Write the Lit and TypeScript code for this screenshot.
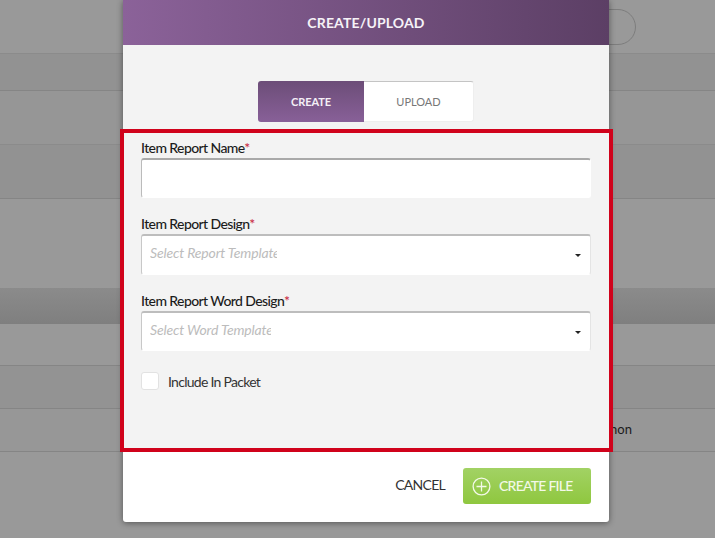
import { LitElement, html, css } from "lit";
import { customElement } from "lit/decorators.js";

@customElement("app-root")
export class AppRoot extends LitElement {
  static styles = css`
    :host { display: block; width: 715px; height: 538px; position: relative; overflow: hidden; background: #999; font-family: Lato, "Liberation Sans", sans-serif; color: #222; }
    * { box-sizing: border-box; }
    .bg { display: flex; flex-direction: column; height: 538px; }
    .row { border-bottom: 1px solid #858585; flex: none; display: flex; justify-content: flex-end; align-items: center; }
    .r0 { height: 54px; background: #999; border-bottom-color: #8b8b8b; padding-right: 79px; }
    .r1 { height: 37px; background: #929292; }
    .r2 { height: 54px; background: #969696; border-bottom-color: #8b8b8b; }
    .r3 { height: 54px; background: #929292; }
    .r4 { height: 89px; background: #999; border: 0; }
    .band { height: 36px; background: linear-gradient(#8b8b8b, #7f7f7f); border: 0; }
    .r5 { height: 42px; background: #999; }
    .r6 { height: 43px; background: #939393; }
    .r7 { height: 43px; background: #979797; padding: 0 83px 2px 0; font-size: 13px; color: #1c1c1c; }
    .circle { width: 72px; height: 36px; border: 1px solid #7d7d7d; border-radius: 18px; margin-top: 1px; }
    .modal { position: absolute; left: 123px; top: 0; width: 486px; height: 522px; background: #fff; border-radius: 0 0 3px 3px; box-shadow: 0 1px 6px rgba(0,0,0,.45); display: flex; flex-direction: column; }
    header { height: 45px; flex: none; background: linear-gradient(90deg, #8b6299, #5c3f65); color: #f6f2f7; font-weight: 700; font-size: 14px; letter-spacing: 0.15px; display: flex; align-items: center; justify-content: center; }
    .top { height: 84px; flex: none; background: #f3f3f3; display: flex; justify-content: center; padding-top: 36px; }
    .tabs { display: flex; height: 41px; width: 216px; }
    .tab { display: flex; align-items: center; justify-content: center; font-size: 11px; }
    .tab.on { width: 106px; background: linear-gradient(#6c4d78, #886098); color: #f4eff6; font-weight: 700; letter-spacing: -0.1px; border-radius: 3px 0 0 3px; }
    .tab.off { width: 110px; background: #fff; color: #777; border: 1px solid #eee; border-top-color: #c4c4c4; border-left: 0; border-radius: 0 3px 3px 0; }
    .form { flex: none; height: 323px; margin: 0 -4px 0 -3px; border: 4px solid #d0021b; background: #f3f3f3; padding: 6px 18px 0 17px; position: relative; display: flex; flex-direction: column; }
    label.f { display: block; font-size: 14px; font-weight: 500; line-height: 18px; height: 19px; color: #1c1c1c; letter-spacing: -0.6px; }
    label.f i { color: #c8213a; font-style: normal; }
    .input { height: 40px; background: #fff; border: 1px solid #fff; border-top: 2px solid #a9a9a9; border-left: 1px solid #bbb; border-radius: 3px; margin-bottom: 17px; }
    .select { height: 41px; background: #fff; border: 1px solid #fff; border-top: 2px solid #bdbdbd; border-left: 1px solid #c8c8c8; border-right-color: #e4e4e4; border-radius: 3px; margin-bottom: 17px; display: flex; align-items: center; padding: 0 9px 5px 8px; justify-content: space-between; }
    .select.w { height: 40px; margin-bottom: 22px; padding-bottom: 4px; }
    .ph { font-style: italic; font-size: 14px; letter-spacing: -0.15px; color: #bcbcbc; width: 127px; overflow: hidden; white-space: nowrap; }
    .w .ph { width: 121px; }
    .caret { width: 0; height: 0; border-left: 3px solid transparent; border-right: 3px solid transparent; border-top: 3px solid #222; margin-top: 6px; }
    .w .caret { margin-top: 5px; }
    .check { display: flex; align-items: center; gap: 9px; font-size: 14px; letter-spacing: -0.72px; color: #333; margin-top: -1px; }
    .box { width: 18px; height: 18px; background: #fff; border: 1px solid #e2e2e2; border-radius: 3px; }
    footer { flex: 1; display: flex; justify-content: flex-end; align-items: flex-start; padding: 16px 18px 0 0; gap: 18px; }
    .cancel { font-size: 14px; line-height: 34px; letter-spacing: -0.72px; color: #333; }
    .create { width: 128px; height: 36px; background: linear-gradient(#a2d264, #8fc73f); border-radius: 3px; color: #f3f9e8; font-size: 14px; font-weight: 500; letter-spacing: -0.75px; display: flex; align-items: center; padding: 0 0 0 9px; gap: 8px; }
    .create span { margin-top: -2px; }
    .create svg { display: block; flex: none; }
  `;

  render() {
    return html`
      <div class="bg">
        <div class="row r0"><div class="circle"></div></div>
        <div class="row r1"></div>
        <div class="row r2"></div>
        <div class="row r3"></div>
        <div class="row r4"></div>
        <div class="row band"></div>
        <div class="row r5"></div>
        <div class="row r6"></div>
        <div class="row r7">hon</div>
      </div>
      <div class="modal">
        <header>CREATE/UPLOAD</header>
        <div class="top">
          <div class="tabs">
            <div class="tab on">CREATE</div>
            <div class="tab off">UPLOAD</div>
          </div>
        </div>
        <div class="form">
          <label class="f">Item Report Name<i>*</i></label>
          <div class="input"></div>
          <label class="f">Item Report Design<i>*</i></label>
          <div class="select"><span class="ph">Select Report Template</span><span class="caret"></span></div>
          <label class="f">Item Report Word Design<i>*</i></label>
          <div class="select w"><span class="ph">Select Word Template</span><span class="caret"></span></div>
          <div class="check"><span class="box"></span>Include In Packet</div>
        </div>
        <footer>
          <span class="cancel">CANCEL</span>
          <div class="create">
            <svg width="19" height="19" viewBox="0 0 19 19" fill="none" stroke="#f3f9e8" stroke-width="1.3"><circle cx="9.5" cy="9.5" r="8.4"/><path d="M9.5 4.5v10M4.5 9.5h10"/></svg>
            <span>CREATE FILE</span>
          </div>
        </footer>
      </div>
    `;
  }
}
